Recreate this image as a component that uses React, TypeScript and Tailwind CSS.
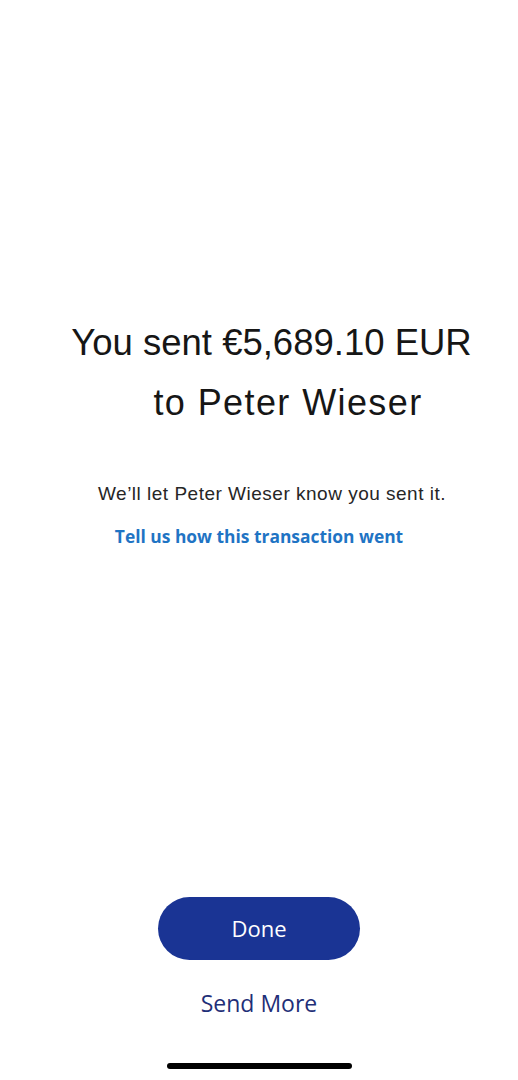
import React from "react";

export default function App() {
  return (
    <div className="w-[518px] h-[1080px] bg-white flex flex-col items-center overflow-hidden">
      <div className="pt-[314px] w-full flex flex-col items-center font-['Liberation_Sans',Arial,sans-serif] text-[#161616] whitespace-nowrap">
        <div className="pl-[25px] text-[36.5px] leading-[58px]">You sent €5,689.10 EUR</div>
        <div className="mt-[2px] pl-[58px] text-[36px] leading-[58px] tracking-[1.4px]">to Peter Wieser</div>
      </div>
      <div className="mt-[50px] pl-[26px] text-[19px] leading-[24px] tracking-[0.5px] text-[#262626] whitespace-nowrap font-['Liberation_Sans',Arial,sans-serif]">
        We’ll let Peter Wieser know you sent it.
      </div>
      <div className="mt-[18px] text-[17.4px] leading-[24px] font-bold text-[#1f74c4] whitespace-nowrap font-['Open_Sans',sans-serif]">
        Tell us how this transaction went
      </div>
      <div className="flex-1" />
      <button className="w-[202px] h-[63px] rounded-full bg-[#1a3494] text-white text-[22px] flex items-center justify-center font-['Open_Sans',sans-serif]">
        Done
      </button>
      <div className="mt-[28px] text-[23px] leading-[30px] text-[#1f2f78] font-['Open_Sans',sans-serif]">
        Send More
      </div>
      <div className="mt-[45px] mb-[11px] w-[185px] h-[6px] rounded-full bg-black" />
    </div>
  );
}
